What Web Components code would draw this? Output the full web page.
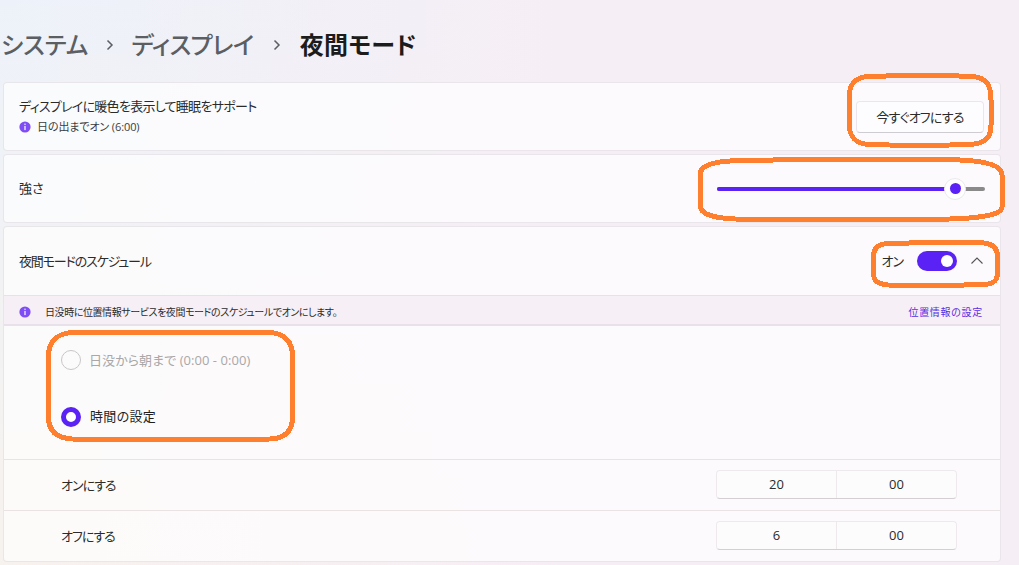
<!DOCTYPE html>
<html lang="ja">
<head>
<meta charset="utf-8">
<title>夜間モード</title>
<style>
	html, body {
		margin: 0;
		height: 100%;
	}
	body {
		width: 1019px;
		height: 565px;
		overflow: hidden;
		position: relative;
		font-family: "Open Sans", "Noto Sans CJK JP", sans-serif;
		font-feature-settings: "palt";
		color: #1f1f1f;
		background:
			linear-gradient(to right, rgba(246, 238, 245, 0), #f6eef5 55%),
			linear-gradient(to bottom, #edf2fa, #f7f2ee);
	}
	main {
		display: block;
		padding: 0 18px 0 3px;
	}
</style>
</head>
<body>
<main>
	<page-title></page-title>
	<settings-card>
		<card-row height="67">
			<div slot="label">
				<div style="letter-spacing:-.72px;margin-top:-1px">ディスプレイに暖色を表示して睡眠をサポート</div>
				<status-line>日の出までオン (6:00)</status-line>
			</div>
			<action-button slot="control">今すぐオフにする</action-button>
		</card-row>
	</settings-card>
	<settings-card>
		<card-row height="67">
			<span slot="label" style="margin-top:-1px">強さ</span>
			<range-slider slot="control"></range-slider>
		</card-row>
	</settings-card>
	<settings-card>
		<card-row height="68">
			<span slot="label" style="letter-spacing:-1.15px">夜間モードのスケジュール</span>
			<toggle-switch slot="control"></toggle-switch>
		</card-row>
		<info-bar link="位置情報の設定">日没時に位置情報サービスを夜間モードのスケジュールでオンにします。</info-bar>
		<radio-group>
			<radio-option disabled>日没から朝まで (0:00 - 0:00)</radio-option>
			<radio-option checked>時間の設定</radio-option>
		</radio-group>
		<time-row hour="20" minute="00">オンにする</time-row>
		<time-row hour="6" minute="00">オフにする</time-row>
	</settings-card>
</main>
<note-rings></note-rings>

<script>
const define = (name, html) => {
	customElements.define(name, class extends HTMLElement {
		constructor() {
			super();
			this.attachShadow({ mode: 'open' });
			this.shadowRoot.innerHTML = typeof html === 'function' ? html(this) : html;
		}
	});
};

const infoIcon = (size) => `
	<svg width="${size}" height="${size}" viewBox="0 0 12 12" style="flex:none;display:block">
		<circle cx="6" cy="6" r="5.6" fill="#7f4df5"/>
		<rect x="5.4" y="2.6" width="1.2" height="1.3" fill="#fff"/>
		<rect x="5.4" y="4.9" width="1.2" height="4.2" fill="#fff"/>
	</svg>`;

const chevron = `<svg width="8" height="12" viewBox="0 0 8 12"><path d="M1.500 1.500 6 6l-4.500 4.500" fill="none" stroke="#5b5f63" stroke-width="1.500"/></svg>`;

define('page-title', `
	<style>
		:host {
			display: flex;
			align-items: center;
			height: 82px;
			padding-top: 8px;
			box-sizing: border-box;
			margin-left: -2px;
			font-size: 24px;
			line-height: 36px;
			font-weight: 500;
			color: #5b5f63;
		}
		svg { display: block; flex: none; }
		.sep { width: 43px; display: flex; justify-content: center; }
		.sep + span + .sep { width: 46px; }
		.mid { letter-spacing: -.5px; }
		.last { color: #1c1c1c; font-weight: 700; letter-spacing: .4px; }
	</style>
	<span>システム</span>
	<span class="sep">${chevron}</span>
	<span class="mid">ディスプレイ</span>
	<span class="sep">${chevron}</span>
	<span class="last">夜間モード</span>
`);

define('settings-card', `
	<style>
		:host {
			display: block;
			margin-bottom: 3px;
			background: rgba(255, 255, 255, .68);
			border: 1px solid rgba(70, 50, 80, .1);
			border-radius: 4px;
			overflow: hidden;
		}
	</style>
	<slot></slot>
`);

define('card-row', (el) => `
	<style>
		:host {
			display: flex;
			align-items: center;
			justify-content: space-between;
			height: ${el.getAttribute('height')}px;
			padding: 0 15px;
			font-size: 13px;
			line-height: 18px;
			color: #2b2b2b;
		}
	</style>
	<slot name="label"></slot>
	<slot name="control"></slot>
`);

define('status-line', `
	<style>
		:host {
			display: flex;
			align-items: center;
			gap: 6px;
			margin-top: 4px;
			font-size: 11px;
			line-height: 16px;
			letter-spacing: -.1px;
			color: #3c3c3c;
		}
	</style>
	${infoIcon(12)}
	<span><slot></slot></span>
`);

define('action-button', `
	<style>
		:host {
			display: flex;
			align-items: center;
			justify-content: center;
			width: 128px;
			height: 32px;
			margin-right: 1px;
			box-sizing: border-box;
			background: #fdfcfe;
			border: 1px solid #eae6ec;
			border-bottom-color: #cfccd1;
			border-radius: 4px;
			font-size: 13px;
			letter-spacing: -.75px;
		}
	</style>
	<slot></slot>
`);

define('range-slider', `
	<style>
		:host {
			display: block;
			width: 268px;
			height: 22px;
			position: relative;
		}
		.track {
			position: absolute;
			left: 0;
			right: 0;
			top: 9px;
			display: flex;
			height: 4px;
			border-radius: 2px;
			overflow: hidden;
			background: #8a8a8a;
		}
		.fill { width: 234px; background: #5b22f5; }
		.thumb {
			position: absolute;
			left: 227px;
			top: 0;
			width: 22px;
			height: 22px;
			box-sizing: border-box;
			border-radius: 50%;
			background: #fff;
			border: 1px solid #ece9ee;
			display: flex;
			align-items: center;
			justify-content: center;
		}
		.thumb i { width: 11px; height: 11px; border-radius: 50%; background: #5b22f5; }
	</style>
	<div class="track"><div class="fill"></div></div>
	<div class="thumb"><i></i></div>
`);

define('toggle-switch', `
	<style>
		:host {
			display: flex;
			align-items: center;
			font-size: 13px;
			letter-spacing: -1px;
			color: #2b2b2b;
			margin-top: -1px;
			margin-right: 1px;
		}
		.pill {
			width: 40px;
			height: 20px;
			margin-left: 14px;
			box-sizing: border-box;
			padding: 0 4px;
			border-radius: 10px;
			background: #5b22f5;
			display: flex;
			align-items: center;
			justify-content: flex-end;
		}
		.pill i { width: 12px; height: 12px; border-radius: 50%; background: #fff; }
		svg { display: block; margin-left: 13px; }
	</style>
	<span><slot>オン</slot></span>
	<div class="pill"><i></i></div>
	<svg width="14" height="10" viewBox="0 0 14 10"><path d="M1.500 7.500 7 2l5.500 5.500" fill="none" stroke="#555" stroke-width="1.100"/></svg>
`);

define('info-bar', (el) => `
	<style>
		:host {
			display: flex;
			align-items: center;
			height: 25px;
			padding: 3px 17px 0 15px;
			background: #f6eff6;
			border-top: 1px solid #e9e1e9;
			border-bottom: 2px solid #e9e1e9;
			font-size: 10px;
			line-height: 14px;
			color: #2b2b2b;
		}
		svg { margin-right: 14px; }
		.text { flex: 1; letter-spacing: -.42px; }
		.link { color: #5b2ee0; letter-spacing: .7px; }
	</style>
	${infoIcon(12)}
	<span class="text"><slot></slot></span>
	<span class="link">${el.getAttribute('link')}</span>
`);

define('radio-group', `
	<style>
		:host {
			display: flex;
			flex-direction: column;
			gap: 37px;
			height: 134px;
			box-sizing: border-box;
			padding: 24px 0 0 57px;
			border-bottom: 1px solid #e9e3e3;
		}
	</style>
	<slot></slot>
`);

define('radio-option', (el) => {
	const on = el.hasAttribute('checked');
	return `
	<style>
		:host {
			display: flex;
			align-items: center;
			gap: 9px;
			height: 20px;
			font-size: 13px;
			color: ${on ? '#1f1f1f' : '#a9a7a8'};
		}
		.dot {
			width: 20px;
			height: 20px;
			box-sizing: border-box;
			border-radius: 50%;
			background: ${on ? '#fff' : 'transparent'};
			border: ${on ? '5px solid #5b22f5' : '1px solid #c9c6c6'};
		}
		span {
			margin-bottom: ${on ? 3 : 1}px;
			margin-left: ${on ? 0 : -1}px;
			letter-spacing: ${on ? .3 : .05}px;
		}
	</style>
	<div class="dot"></div>
	<span><slot></slot></span>`;
});

define('time-row', (el) => `
	<style>
		:host {
			display: flex;
			align-items: center;
			justify-content: space-between;
			height: 48px;
			padding: 0 43px 2px 57px;
			font-size: 13px;
			color: #2b2b2b;
		}
		:host(:not(:last-child)) { border-bottom: 1px solid #e9e3e3; }
		.label { letter-spacing: -1px; }
		.picker {
			display: flex;
			width: 241px;
			height: 29px;
			box-sizing: border-box;
			background: #fdfcfd;
			border: 1px solid #eee9ec;
			border-bottom-color: #d3cfd2;
			border-radius: 4px;
			font-size: 13px;
		}
		.picker span {
			flex: 1;
			display: flex;
			align-items: center;
			justify-content: center;
		}
		.picker span + span { border-left: 1px solid #eee9ec; }
	</style>
	<span class="label"><slot></slot></span>
	<div class="picker"><span>${el.getAttribute('hour')}</span><span>${el.getAttribute('minute')}</span></div>
`);

// hand drawn orange marks lying over the page
define('note-rings', `
	<style>
		:host {
			position: absolute;
			inset: 0;
			pointer-events: none;
		}
		svg { display: block; }
		path { fill: none; stroke: #fe7f2d; stroke-width: 5; shape-rendering: crispEdges; }
	</style>
	<svg width="1019" height="565">
		<path d="M868 76.500C900 75.500 950 75.500 972 76.500C986 77.500 991 84 991 100L991 125C991 138 985 143.500 970 144.500C940 145.500 900 145.500 868 144.500C855 143.500 849 137 849 122L849 98C849 84 855 77.500 868 76.500Z"/>
		<path d="M730 161C790 159 900 159 960 160C985 161 1002 165 1002 175L1002 207C1002 214 985 218 950 219C880 220 790 220 735 219C712 218 700 214 700 205L700 175C700 166 712 162 730 161Z"/>
		<path d="M888 243.500C920 242.500 960 242.500 984 243C993 244 997.500 248 997.500 256L997.500 273C997.500 281 993 284 984 284.500C950 285.500 920 286 888 285C878 284 873.500 281 873.500 273L873.500 256C873.500 248 878 244 888 243.500Z"/>
		<path d="M72 332.500C120 332 220 332 270 332.500C285 333.500 292.500 342 292.500 356L292.500 417C292.500 431 285 438.500 270 439C220 440 120 440 72 439C57 438 48.500 431 48.500 417L48.500 356C48.500 342 57 333.500 72 332.500Z"/>
	</svg>
`);
</script>
</body>
</html>
